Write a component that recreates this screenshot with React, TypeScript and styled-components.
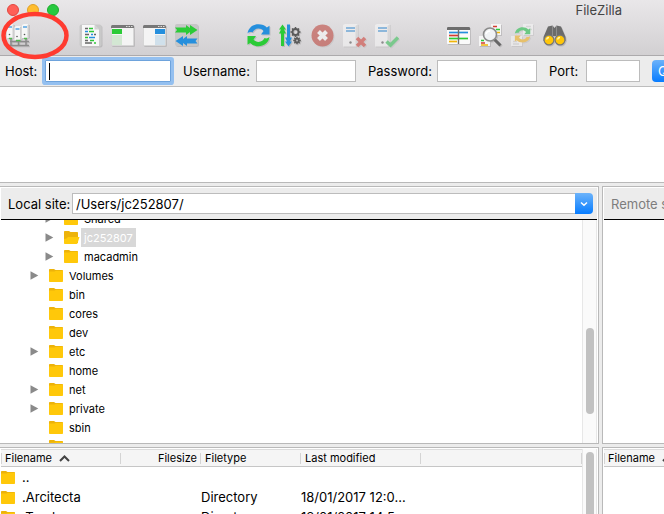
import React from "react";
import styled, { createGlobalStyle, css } from "styled-components";

const GlobalStyle = createGlobalStyle`
  *, *::before, *::after { box-sizing: border-box; }
  body {
    margin: 0;
    overflow: hidden;
    background: #ececec;
    color: #000;
    font-family: Inter, "Liberation Sans", sans-serif;
    font-size: 13px;
    line-height: 16px;
  }
  button, input { font: inherit; color: inherit; margin: 0; padding: 0; border: 0; }
`;

const LINE = "#b9b9b9";

const Window = styled.div`
  display: flex;
  flex-direction: column;
  height: 100vh;
  overflow: hidden;
`;

const Chrome = styled.header`
  position: relative;
  flex: none;
  background: linear-gradient(#e9e7e9, #d2d0d2);
  border-bottom: 1px solid #acaaac;
`;

const TitleBar = styled.div`
  display: flex;
  align-items: center;
  gap: 8px;
  height: 20px;
  padding: 0 42px 0 7px;
`;

const Light = styled.button<{ $color: string; $edge: string }>`
  width: 12px;
  height: 12px;
  border: 1px solid ${(p) => p.$edge};
  border-radius: 50%;
  background: ${(p) => p.$color};
`;

const Title = styled.h1`
  margin: 0 0 0 auto;
  font-size: 13px;
  font-weight: 400;
  color: #444;
`;

const Toolbar = styled.div`
  display: flex;
  gap: 48px;
  padding: 4px 7px 7px;
`;

const ToolGroup = styled.div`
  display: flex;
  gap: 8px;
`;

const ToolButton = styled.button`
  flex: none;
  width: 24px;
  height: 24px;
  background: none;
  opacity: ${(p) => (p.disabled ? 0.5 : 1)};

  svg {
    display: block;
    filter: drop-shadow(1px 1px 0 rgba(0, 0, 0, 0.12));
  }
`;

const Marker = styled.svg`
  position: absolute;
  top: 11px;
  left: 1px;
  pointer-events: none;
`;

const ConnectBar = styled.form`
  display: flex;
  flex: none;
  gap: 12px;
  padding: 4px 5px;
  border-bottom: 1px solid #bdbdbd;
`;

const Field = styled.label<{ $label: number; $input: number }>`
  position: relative;
  display: grid;
  flex: none;
  grid-template-columns: ${(p) => p.$label}px ${(p) => p.$input}px;
  align-items: center;
`;

const TextBox = styled.input<{ $active?: boolean }>`
  width: 100%;
  height: 22px;
  padding: 0 4px;
  border: 1px solid #bcbcbc;
  background: #fff;
  outline: none;
  ${(p) =>
    p.$active &&
    css`
      border-color: #6ea3dc;
      border-radius: 1px;
      box-shadow: 0 0 0 3px #94c0f0;
      caret-color: transparent;
    `}
`;

const Caret = styled.span`
  position: absolute;
  left: 44px;
  width: 1px;
  height: 17px;
  background: #000;
`;

const QuickConnect = styled.button`
  flex: none;
  height: 22px;
  padding: 0 6px;
  border-radius: 4px;
  background: linear-gradient(#6cb3fa, #067cff);
  color: #fff;
`;

const Log = styled.section`
  flex: none;
  height: 96px;
  border-bottom: 1px solid ${LINE};
  background: #fff;
`;

const Row = styled.div<{ $grow?: boolean }>`
  display: flex;
  flex: ${(p) => (p.$grow ? "1 1 0" : "none")};
  gap: 3px;
  min-height: 0;
  margin-top: 3px;
`;

const Pane = styled.section<{ $side: "local" | "remote"; $open?: boolean }>`
  display: flex;
  flex-direction: column;
  flex: ${(p) => (p.$side === "local" ? "1 1 0" : "0 0 62px")};
  min-width: 0;
  overflow: hidden;
  padding: 1px 0 0 1px;
  border: solid ${LINE};
  border-width: ${(p) => (p.$side === "local" ? "1px 1px" : "1px 0")} ${(p) => (p.$open ? 0 : "1px")}
    ${(p) => (p.$side === "local" ? 0 : "1px")};
  background: #fff;
`;

const SiteBar = styled.div<{ $muted?: boolean }>`
  display: flex;
  align-items: center;
  gap: 4px;
  height: 32px;
  margin-right: ${(p) => (p.$muted ? 0 : "1px")};
  padding: 0 4px 0 7px;
  border-bottom: 1px solid #000;
  background: #ececec;
  color: ${(p) => (p.$muted ? "#7d7d7d" : "#000")};
  white-space: nowrap;
`;

const SiteLabel = styled.label`
  flex: none;
  width: 60px;
`;

const Combo = styled.div`
  display: flex;
  flex: 1;
  height: 21px;
`;

const ComboInput = styled.input`
  flex: 1;
  min-width: 0;
  padding: 0 3px;
  border: 1px solid #bcbcbc;
  border-right: 0;
  background: #fff;
`;

const ComboButton = styled.button`
  display: grid;
  place-items: center;
  width: 18px;
  border-radius: 0 4px 4px 0;
  background: linear-gradient(#6cb3fa, #067cff);
`;

const Scroller = styled.div<{ $height?: number }>`
  display: flex;
  flex: ${(p) => (p.$height ? "none" : "1 1 0")};
  height: ${(p) => (p.$height ? `${p.$height}px` : "auto")};
  min-height: 0;
  overflow: hidden;
`;

const ScrollTrack = styled.div<{ $offset: number }>`
  flex: none;
  width: 15px;
  margin-right: 1px;
  padding: ${(p) => p.$offset}px 2px 0 3px;
  border: solid #e7e7e7;
  border-width: 0 1px;
  background: #fafafa;
`;

const ScrollThumb = styled.div<{ $length: number }>`
  width: 8px;
  height: ${(p) => p.$length}px;
  border-radius: 4px;
  background: #c1c1c1;
`;

const Tree = styled.ul`
  flex: 1;
  margin: -11px 0 0;
  padding: 0;
  list-style: none;
  font-size: 11px;
`;

const TreeRow = styled.li<{ $depth: number }>`
  display: flex;
  align-items: center;
  height: 19px;
  padding-left: ${(p) => 29 + p.$depth * 15}px;
`;

const Twisty = styled.span`
  display: flex;
  width: 19px;
`;

const TreeLabel = styled.span<{ $selected?: boolean }>`
  height: 19px;
  margin-left: 3px;
  padding: 0 3px;
  line-height: 21px;
  background: ${(p) => (p.$selected ? "#d8d8d8" : "transparent")};
  color: ${(p) => (p.$selected ? "#fff" : "#000")};
`;

const TableArea = styled.div`
  flex: 1;
  min-width: 0;
  overflow: hidden;
`;

const FileTable = styled.table`
  width: 100%;
  table-layout: fixed;
  border-collapse: separate;
  border-spacing: 0;
`;

const HeadCell = styled.th<{ $width?: number; $right?: boolean; $first?: boolean }>`
  width: ${(p) => (p.$width ? `${p.$width}px` : "auto")};
  height: 18px;
  padding: 0 4px;
  border-top: 1px solid #dcdcdc;
  border-bottom: 1px solid #c6c6c6;
  background:
    linear-gradient(#d4d4d4, #d4d4d4) right center / 1px 11px no-repeat,
    ${(p) =>
      p.$first ? "linear-gradient(#d4d4d4, #d4d4d4) left center / 1px 11px no-repeat," : ""}
    #f5f5f5;
  font-size: 11px;
  font-weight: 400;
  line-height: 16px;
  text-align: ${(p) => (p.$right ? "right" : "left")};
  white-space: nowrap;

  svg { margin-left: 7px; }
`;

const Cell = styled.td`
  height: 20px;
  padding: 0;
  overflow: hidden;
  line-height: 20px;
  white-space: nowrap;
  text-overflow: ellipsis;
`;

const FileName = styled.span`
  display: flex;
  align-items: center;
  gap: 7px;
`;

const FolderSvg = styled.svg`
  flex: none;
  overflow: visible;
`;

/* ---------- icons ---------- */

const Folder = ({ open }: { open?: boolean }) => (
  <FolderSvg width="14" height="13" viewBox="0 0 14 13">
    <path d="M0 .8Q0 0 .8 0H5L6.500 1H13.200Q14 1 14 1.800V12H0Z" fill="#edb30a" />
    {open ? (
      <path d="M0 8Q3 8 4 6H15.500L13.500 12.300Q13.300 13 12.500 13H.8Q0 13 0 12.200Z" fill="#ffcb0b" />
    ) : (
      <path d="M0 2.500H5.500L7 1.800H14V12.200Q14 13 13.200 13H.8Q0 13 0 12.200Z" fill="#ffc80a" />
    )}
  </FolderSvg>
);

const Triangle = () => (
  <svg width="9" height="9" viewBox="0 0 9 9">
    <path d="M.5 .3L8.300 4.500L.5 8.700Z" fill="#8a8a8a" />
  </svg>
);

const SortCaret = () => (
  <svg width="11" height="7" viewBox="0 0 11 7">
    <path d="M1 6L5.500 1.500L10 6" fill="none" stroke="#444" strokeWidth="2" />
  </svg>
);

const Glyph = ({ children }: { children: React.ReactNode }) => (
  <svg width="24" height="24" viewBox="0 0 24 24">
    {children}
  </svg>
);

const Tower = ({ x, y }: { x: number; y: number }) => (
  <g>
    <path d={`M${x} ${y + 1}L${x + 2} ${y}H${x + 7}V${y + 13}L${x + 5} ${y + 14}H${x}Z`} fill="#f6f6f6" />
    <path d={`M${x + 5.5} ${y + 1}L${x + 7} ${y}V${y + 13}L${x + 5.5} ${y + 14}Z`} fill="#cdcdcd" />
    <path d={`M${x + 1} ${y + 3}H${x + 5}`} stroke="#6fb2e6" strokeWidth="1.8" />
    <circle cx={x + 2.5} cy={y + 10.5} r=".8" fill="#555" />
  </g>
);

const SiteManagerIcon = () => (
  <Glyph>
    <path d="M4 14V21M11.500 16V21M19 14V21M3 17.500H22M1 21.500H22" stroke="#8b8b8b" strokeWidth="1.500" fill="none" />
    <Tower x={0} y={0} />
    <Tower x={15} y={0} />
    <Tower x={7.5} y={2} />
    <path d="M2 14.500H5M9 16.500H13.500M17 14.500H20" stroke="#4fbd4f" strokeWidth="1.300" />
  </Glyph>
);

const LogIcon = () => (
  <Glyph>
    <rect x=".5" y=".5" width="22" height="22" rx="2" fill="#c9c9c9" />
    <path d="M3 1H15.500L20 5.500V22H3Z" fill="#f8f8f8" />
    <path d="M15.500 1V5.500H20Z" fill="#d2d2d2" />
    <g fill="none" strokeWidth="1.500">
      <path d="M6 4.500H9M6 10.500H10M15 10.500H17M6 16.500H9M6 19H13" stroke="#666" />
      <path d="M10 4.500H14M6 13.500H9M11 16.500H15M10 7.500H15" stroke="#2fc738" />
      <path d="M6 7.500H9M12 10.500H14M10 13.500H16" stroke="#258fdd" />
      <path d="M15 19H17" stroke="#2fc738" />
    </g>
  </Glyph>
);

const PanelIcon = ({ side }: { side: "left" | "right" }) => {
  const left = side === "left";
  return (
    <Glyph>
      <rect x="0" y="1" width="23" height="21" rx="1.500" fill="#cfcfcf" />
      <rect x=".8" y="4" width="21.400" height="17.200" fill="#f4f4f4" />
      <path d="M0 4V2.500Q0 1 1.500 1H21.500Q23 1 23 2.500V4Z" fill="#777" />
      <path d="M15 2.500H16.500M17.500 2.500H19M20 2.500H21.500" stroke="#ddd" />
      <rect x={left ? 1 : 12} y="5" width="10" height="5" fill={left ? "#2bcb37" : "#258fdd"} />
      <rect x={left ? 1 : 12} y="11" width="10" height="10" fill={left ? "#d3e7d3" : "#d0e0eb"} />
    </Glyph>
  );
};

const QueueIcon = () => (
  <Glyph>
    <rect x="0" y="0" width="23" height="22" rx="2" fill="#c6c6c6" />
    <path d="M0 3.500H11V1L15 4V1L22.500 6L15 11V8L11 11V8.500H0L2 6Z" fill="#2bcb37" />
    <path d="M22.500 14.500H12V12L8 15V12L.5 17L8 22V19L12 22V19.500H22.500L20.500 17Z" fill="#258fdd" />
  </Glyph>
);

const RefreshShapes = ({ top, bottom }: { top: string; bottom: string }) => (
  <g>
    <path d="M.5 9.500C1.500 3.500 6 .3 11.500 .3C15 .3 17.800 1.500 19.800 3.500L22.500 1.800V10.500H14L16.500 7C15 5.300 13.500 4.600 11.500 4.600C8.500 4.600 6.500 6.500 5.500 8.500C4 7.800 2 8 .5 9.500Z" fill={top} />
    <path d="M22.500 13C21.500 19 17 22.200 11.500 22.200C8 22.200 5.200 21 3.200 19L.5 20.700V12H9L6.500 15.500C8 17.200 9.500 17.900 11.500 17.900C14.500 17.900 16.500 16 17.500 14C19 14.700 21 14.500 22.500 13Z" fill={bottom} />
  </g>
);

const Gear = ({ x, y, r }: { x: number; y: number; r: number }) => (
  <g transform={`translate(${x} ${y})`} stroke="#5b5b5b" fill="none">
    <circle r={r - 2} strokeWidth="1.800" />
    {[0, 45, 90, 135].map((a) => (
      <path key={a} transform={`rotate(${a})`} d={`M0 ${-r}V${-r + 2}M0 ${r}V${r - 2}`} strokeWidth="1.500" />
    ))}
  </g>
);

const ProcessIcon = () => (
  <Glyph>
    <path d="M3.500 .5L7 5.500H5L7 9.500H5V22H2V9.500H0L2 5.500H0Z" fill="#2bcb37" />
    <path d="M8 .5H11V13.500H13L11 17.500H13L9.500 22.500L6 17.500H8L6 13.500H8Z" fill="#258fdd" />
    <Gear x={16.5} y={8} r={5} />
    <Gear x={18} y={16.5} r={3.8} />
  </Glyph>
);

const CancelIcon = () => (
  <Glyph>
    <circle cx="11.500" cy="11.500" r="11" fill="#b82c22" />
    <path d="M7.500 7.500L15.500 15.500M15.500 7.500L7.500 15.500" stroke="#fff" strokeWidth="4" />
  </Glyph>
);

const ServerIcon = ({ ok }: { ok?: boolean }) => (
  <Glyph>
    <path d="M0 1L2 0H15V20L13 22.500H0Z" fill="#fbfbfb" />
    <path d="M12.500 2L15 0V20L12.500 22.500Z" fill="#d6d6d6" />
    <path d="M3 4H12M3 7H12" stroke="#4095da" strokeWidth="1.800" />
    <circle cx="7.500" cy="18.500" r="1.200" fill="#444" />
    {ok ? (
      <path d="M11.500 17.500L15.500 21L23 13.500" stroke="#20bd45" strokeWidth="3.500" fill="none" />
    ) : (
      <path d="M14 14L22 22M22 14L14 22" stroke="#cd2a20" strokeWidth="3.600" />
    )}
  </Glyph>
);

const FilterIcon = () => (
  <Glyph>
    <rect x="0" y="3" width="23" height="17" rx="1" fill="#fafafa" />
    <path d="M0 6V4Q0 3 1 3H22Q23 3 23 4V6Z" fill="#6d6d6d" />
    <g strokeWidth="1.700">
      <path d="M2 8.500H21" stroke="#258fdd" />
      <path d="M2 11.500H11" stroke="#d43c32" />
      <path d="M2 14.500H21" stroke="#2bcb37" />
      <path d="M2 17.500H10" stroke="#f0b50a" />
      <path d="M11.500 5V20" stroke="#6d6d6d" strokeWidth="1.400" />
    </g>
  </Glyph>
);

const CompareIcon = () => (
  <Glyph>
    <path d="M12 0H22V11H12Z" fill="#f5f5f5" />
    <path d="M0 12H11V22H0Z" fill="#f5f5f5" />
    <g strokeWidth="1.700">
      <path d="M14 2.500H18M2 19H6" stroke="#d43c32" />
      <path d="M17 5.500H21M2 16.500H5" stroke="#2bcb37" />
      <path d="M18 8.500H21M2 21H9" stroke="#f0b50a" />
    </g>
    <path d="M15.500 15.500L21.500 21.500" stroke="#676767" strokeWidth="3" />
    <circle cx="11" cy="10.500" r="6.500" fill="#f0f2f4" stroke="#8b8b8b" strokeWidth="1.600" />
    <path d="M7 10Q8 7 11 7" stroke="#fff" strokeWidth="1.600" fill="none" />
  </Glyph>
);

const SyncIcon = () => (
  <Glyph>
    <path d="M12 0H22V11H12ZM0 12H11V22H0Z" fill="#fafafa" />
    <path d="M15 2.500H20M18 5.500H21M2 17.500H6M2 20H8" stroke="#d0d0d0" strokeWidth="1.500" />
    <g transform="translate(3.500 3) scale(.7)">
      <RefreshShapes top="#00b82e" bottom="#f7ac00" />
    </g>
  </Glyph>
);

const BinocularsIcon = () => (
  <Glyph>
    <path d="M5 2.500L9.500 1.500L11.500 4L13.500 1.500L18 2.500L22.500 13V17H13.500V12H9.500V17H.5V13Z" fill="#6b6b6b" />
    <path d="M9.500 2V12M13.500 2V12" stroke="#8d8d8d" />
    {[6, 17].map((x) => (
      <g key={x}>
        <circle cx={x} cy="16" r="5.500" fill="#767676" />
        <circle cx={x} cy="16" r="4.300" fill="#ffc60a" />
        <path d={`M${x - 2.5} 15.500Q${x - 2} 13.500 ${x} 13.500`} stroke="#fff3b0" strokeWidth="1.300" fill="none" />
      </g>
    ))}
  </Glyph>
);

/* ---------- data ---------- */

type Tool = { label: string; icon: React.ReactNode; disabled?: boolean };

const toolGroups: Tool[][] = [
  [{ label: "Site Manager", icon: <SiteManagerIcon /> }],
  [
    { label: "Toggle message log", icon: <LogIcon /> },
    { label: "Toggle local tree", icon: <PanelIcon side="left" /> },
    { label: "Toggle remote tree", icon: <PanelIcon side="right" /> },
    { label: "Toggle transfer queue", icon: <QueueIcon /> },
  ],
  [
    { label: "Refresh", icon: <Glyph><RefreshShapes top="#258fdd" bottom="#2bcb37" /></Glyph> },
    { label: "Process queue", icon: <ProcessIcon /> },
    { label: "Cancel", icon: <CancelIcon />, disabled: true },
    { label: "Disconnect", icon: <ServerIcon />, disabled: true },
    { label: "Reconnect", icon: <ServerIcon ok />, disabled: true },
  ],
  [
    { label: "Filter listings", icon: <FilterIcon /> },
    { label: "Compare directories", icon: <CompareIcon /> },
    { label: "Synchronized browsing", icon: <SyncIcon />, disabled: true },
    { label: "Search files", icon: <BinocularsIcon /> },
  ],
];

const treeItems = [
  { name: "Shared", depth: 1, expandable: true },
  { name: "jc252807", depth: 1, expandable: true, selected: true },
  { name: "macadmin", depth: 1, expandable: true },
  { name: "Volumes", depth: 0, expandable: true },
  { name: "bin", depth: 0 },
  { name: "cores", depth: 0 },
  { name: "dev", depth: 0 },
  { name: "etc", depth: 0, expandable: true },
  { name: "home", depth: 0 },
  { name: "net", depth: 0, expandable: true },
  { name: "private", depth: 0, expandable: true },
  { name: "sbin", depth: 0 },
  { name: "", depth: 0 },
];

const files = [
  { name: "..", type: "", modified: "" },
  { name: ".Arcitecta", type: "Directory", modified: "18/01/2017 12:0..." },
  { name: ".Trash", type: "Directory", modified: "18/01/2017 14:5..." },
];

export default function App() {
  return (
    <Window>
      <GlobalStyle />
      <Chrome>
        <TitleBar>
          <Light $color="#ff5f57" $edge="#e2463f" aria-label="Close" />
          <Light $color="#ffbd2e" $edge="#e0a028" aria-label="Minimise" />
          <Light $color="#28c940" $edge="#1dad2b" aria-label="Zoom" />
          <Title>FileZilla</Title>
        </TitleBar>
        <Toolbar>
          {toolGroups.map((group) => (
            <ToolGroup key={group[0].label}>
              {group.map((tool) => (
                <ToolButton key={tool.label} aria-label={tool.label} disabled={tool.disabled}>
                  {tool.icon}
                </ToolButton>
              ))}
            </ToolGroup>
          ))}
        </Toolbar>
      </Chrome>

      <ConnectBar>
        <Field $label={40} $input={126}>
          Host:
          <TextBox $active />
          <Caret />
        </Field>
        <Field $label={73} $input={100}>
          Username:
          <TextBox />
        </Field>
        <Field $label={69} $input={100}>
          Password:
          <TextBox type="password" />
        </Field>
        <Field $label={37} $input={54}>
          Port:
          <TextBox />
        </Field>
        <QuickConnect type="button">Quickconnect</QuickConnect>
      </ConnectBar>

      <Log aria-label="Message log" />

      <Row>
        <Pane $side="local">
          <SiteBar>
            <SiteLabel htmlFor="local-site">Local site:</SiteLabel>
            <Combo>
              <ComboInput id="local-site" defaultValue="/Users/jc252807/" />
              <ComboButton aria-label="Show recent folders">
                <svg width="8" height="6" viewBox="0 0 8 6">
                  <path d="M1 1.500L4 4.200L7 1.500" fill="none" stroke="#fff" strokeWidth="1.500" />
                </svg>
              </ComboButton>
            </Combo>
          </SiteBar>
          <Scroller $height={223}>
            <Tree>
              {treeItems.map((item) => (
                <TreeRow key={item.name} $depth={item.depth}>
                  <Twisty>{item.expandable && <Triangle />}</Twisty>
                  <Folder open={item.selected} />
                  <TreeLabel $selected={item.selected}>{item.name}</TreeLabel>
                </TreeRow>
              ))}
            </Tree>
            <ScrollTrack $offset={108}>
              <ScrollThumb $length={86} />
            </ScrollTrack>
          </Scroller>
        </Pane>
        <Pane $side="remote">
          <SiteBar $muted>Remote site:</SiteBar>
        </Pane>
      </Row>

      <Row $grow>
        <Pane $side="local" $open>
          <Scroller>
            <TableArea>
              <FileTable>
                <thead>
                  <tr>
                    <HeadCell $width={120} $first>
                      Filename
                      <SortCaret />
                    </HeadCell>
                    <HeadCell $width={80} $right>Filesize</HeadCell>
                    <HeadCell $width={100}>Filetype</HeadCell>
                    <HeadCell $width={120}>Last modified</HeadCell>
                    <HeadCell />
                  </tr>
                </thead>
                <tbody>
                  {files.map((file) => (
                    <tr key={file.name}>
                      <Cell>
                        <FileName>
                          <Folder />
                          {file.name}
                        </FileName>
                      </Cell>
                      <Cell />
                      <Cell>{file.type}</Cell>
                      <Cell>{file.modified}</Cell>
                      <Cell />
                    </tr>
                  ))}
                </tbody>
              </FileTable>
            </TableArea>
            <ScrollTrack $offset={3}>
              <ScrollThumb $length={120} />
            </ScrollTrack>
          </Scroller>
        </Pane>
        <Pane $side="remote" $open>
          <FileTable>
            <thead>
              <tr>
                <HeadCell $width={120} $first>
                  Filename
                  <SortCaret />
                </HeadCell>
              </tr>
            </thead>
          </FileTable>
        </Pane>
      </Row>

      <Marker width="68" height="49" viewBox="0 0 68 49" aria-hidden="true">
        <ellipse cx="34" cy="24.500" rx="31.500" ry="21.500" fill="none" stroke="#ff3b30" strokeWidth="4.500" />
      </Marker>
    </Window>
  );
}
